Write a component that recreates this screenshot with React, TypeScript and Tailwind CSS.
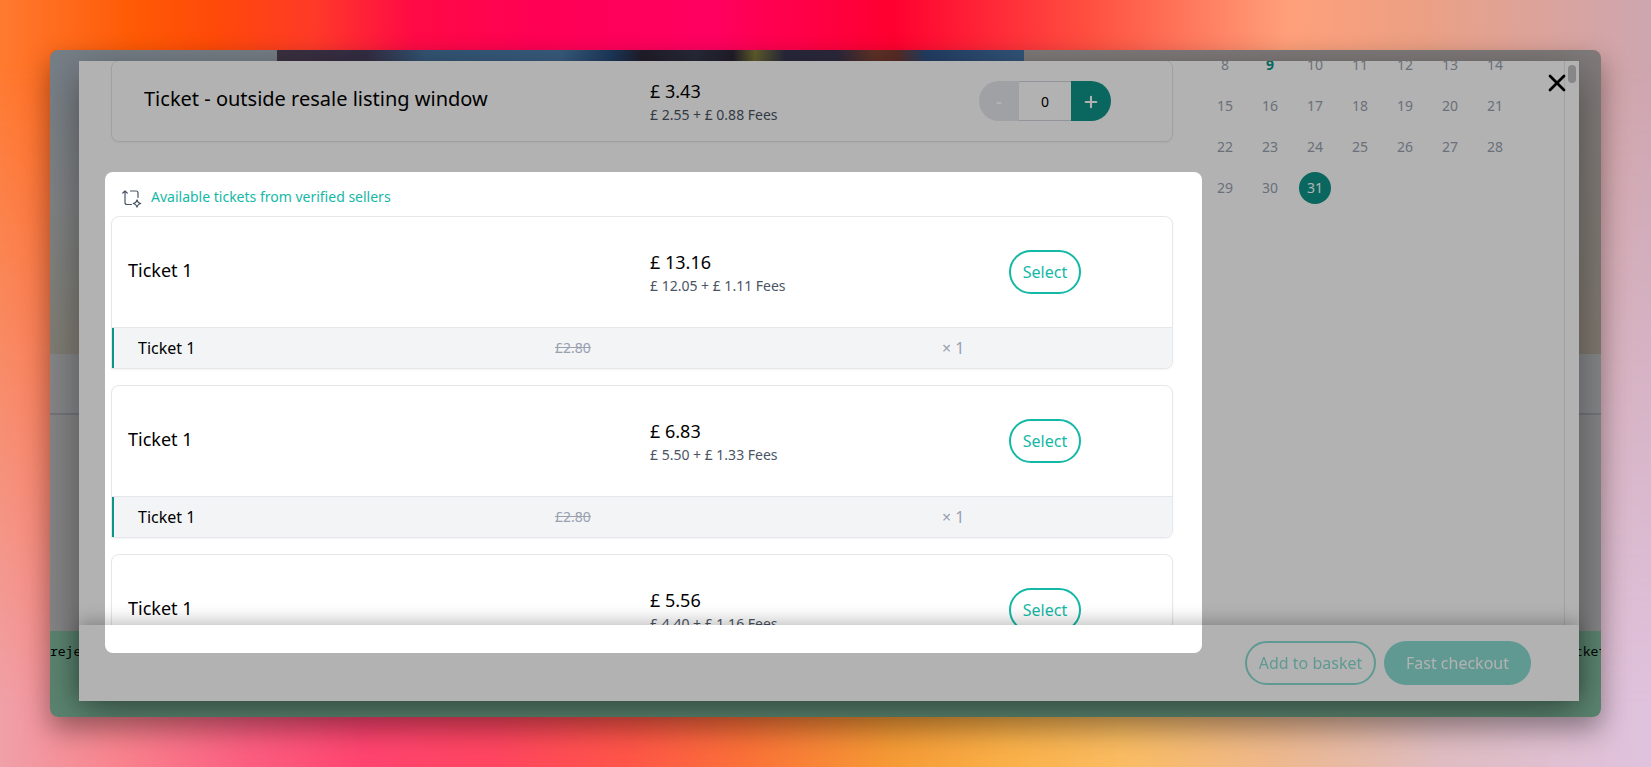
import React from 'react';
import { Plus, X } from "lucide-react";

interface Resale {
  id: number;
  name: string;
  price: string;
  breakdown: string;
  original: string;
  quantity: number;
}

const resales: Resale[] = [
  { id: 1, name: 'Ticket 1', price: '£ 13.16', breakdown: '£ 12.05 + £ 1.11 Fees', original: '£2.80', quantity: 1 },
  { id: 2, name: 'Ticket 1', price: '£ 6.83', breakdown: '£ 5.50 + £ 1.33 Fees', original: '£2.80', quantity: 1 },
  { id: 3, name: 'Ticket 1', price: '£ 5.56', breakdown: '£ 4.40 + £ 1.16 Fees', original: '£2.80', quantity: 1 },
];

const weeks = [
  [8, 9, 10, 11, 12, 13, 14],
  [15, 16, 17, 18, 19, 20, 21],
  [22, 23, 24, 25, 26, 27, 28],
  [29, 30, 31],
];

function dayClass(day: number) {
  if (day === 31) return 'flex size-8 items-center justify-center rounded-full bg-[#0d9488] text-white';
  if (day === 9) return 'flex size-8 items-center justify-center font-bold text-[#0d9488]';
  return 'flex size-8 items-center justify-center text-gray-400';
}

function ResaleIcon() {
  return (
    <svg viewBox="0 0 20 20" className="mt-1 size-5 text-gray-600" fill="none" stroke="currentColor" strokeWidth="1.2" strokeLinecap="round" strokeLinejoin="round" aria-hidden="true">
      <path d="M.8 4 3 2l2.2 2M3 2v11.5q0 2 2 2h4.5" />
      <path d="M8.5 2H14q2 0 2 2v4.5" />
      <path d="M15 10.8q.7 3 3.7 3.7-3 .7-3.7 3.7-.7-3-3.7-3.7 3-.7 3.7-3.7Z" />
    </svg>
  );
}

function Price({ price, breakdown }: { price: string; breakdown: string }) {
  return (
    <div className="pt-1">
      <p className="text-lg leading-6 text-black">{price}</p>
      <p className="text-sm leading-6 text-gray-600">{breakdown}</p>
    </div>
  );
}

function Stepper() {
  return (
    <div className="flex h-10 w-33">
      <button type="button" disabled aria-label="Remove one" className="w-10 rounded-l-full bg-gray-200 text-lg font-semibold text-white">-</button>
      <input aria-label="Quantity" defaultValue="0" className="w-13 border-y border-gray-300 bg-white pt-0.5 text-center text-sm text-black" />
      <button type="button" aria-label="Add one" className="flex w-10 items-center justify-center rounded-r-full bg-[#0d9488] pt-0.5 text-white">
        <Plus className="size-[18px]" strokeWidth={2.8} />
      </button>
    </div>
  );
}

function ResaleCard({ item }: { item: Resale }) {
  return (
    <li className="rounded-t-lg rounded-br-lg border border-gray-200 bg-white shadow-xs">
      <div className="grid h-[110px] grid-cols-[522fr_284fr_222fr] items-center px-4">
        <h3 className="pb-1 text-lg text-black">{item.name}</h3>
        <Price price={item.price} breakdown={item.breakdown} />
        <button type="button" className="h-11 w-18 justify-self-center rounded-full border-2 border-[#14b8a6] text-base text-[#14b8a6]">Select</button>
      </div>
      <div className="border-t border-gray-200">
        <div className="grid h-10 grid-cols-[417fr_387fr_230fr] items-center rounded-br-lg border-l-2 border-[#0d9488] bg-gray-100 pl-6 text-base">
          <p className="text-black">{item.name}</p>
          <p className="text-sm text-gray-400 line-through">{item.original}</p>
          <p className="text-gray-400">× {item.quantity}</p>
        </div>
      </div>
    </li>
  );
}

function Calendar() {
  return (
    <table className="-mt-[17px] ml-9 border-collapse text-sm">
      <tbody>
        {weeks.map((week) => (
          <tr key={week[0]}>
            {week.map((day) => (
              <td key={day} className="h-[41px] w-[45px] p-0 align-middle">
                <span className={dayClass(day)}>{day}</span>
              </td>
            ))}
          </tr>
        ))}
      </tbody>
    </table>
  );
}

function PageBehind() {
  return (
    <div className="absolute inset-0 flex flex-col overflow-hidden rounded-lg">
      <div className="flex h-[304px]">
        <div className="w-[227px] bg-linear-to-b from-[#aab6c2] via-[#b8bcbe] to-[#b8b4a6]" />
        <div className="h-full w-[747px] bg-[linear-gradient(90deg,#56465c_0%,#4c4262_12%,#4a7ba8_20%,#5185b5_38%,#285080_45%,#302a3c_49%,#3a3c52_56%,#302a3c_61%,#8a8640_64%,#3a3a56_68%,#403a56_75%,#8a4838_80%,#804038_83%,#325a90_87%,#4a7bb0_100%)]" />
        <div className="flex-1 bg-linear-to-b from-[#b8b0b0] to-[#b6ad9f]" />
      </div>
      <div className="h-[61px] border-b-2 border-[#a6a8ae] bg-[#c0c1c4]" />
      <div className="flex-1 bg-[#bfbfc1]" />
      <div className="flex h-[86px] justify-between bg-[#83bfa1] pt-3 font-['Noto_Sans_Mono','DejaVu_Sans_Mono',monospace] text-[13px] leading-4 text-black">
        <span>reje</span>
        <span className="w-[26px]">cket</span>
      </div>
    </div>
  );
}

function App() {
  return (
    <div className="min-h-screen bg-[linear-gradient(90deg,#ff7a30_0%,#ff5a05_8%,#ff4a08_13%,#ff3a28_19%,#ff0a45_25%,#ff0055_33%,#ff0060_43%,#ff0030_54%,#ff5040_66%,#ffa07a_78%,#eca084_86%,#cda6b0_100%)] font-['Noto_Sans','Open_Sans',sans-serif]">
      <div className="min-h-screen bg-[linear-gradient(90deg,#f0a0a8_0%,#f8848e_7%,#fb5e80_15%,#ff4470_22%,#ff4560_30%,#ff5548_38%,#fb7038_45%,#f59a35_54%,#fab048_61%,#fabc62_68%,#eeb88c_77%,#dfbcc0_87%,#dfc2de_100%)] mask-[linear-gradient(to_bottom,transparent_8%,black_92%)]" />
      <div className="relative -mt-[100vh] h-screen p-[50px]">
        <div className="relative h-full overflow-hidden rounded-lg pt-[11px] pr-[22px] pb-4 pl-[29px] shadow-[0_12px_28px_rgba(0,0,0,0.4)]">
          <PageBehind />
          <main className="relative flex h-full flex-col bg-white shadow-[0_12px_40px_rgba(0,0,0,0.4)]">
            <div className="flex min-h-0 flex-1 overflow-hidden pl-8">
              <section className="w-[1062px] max-w-[73%] shrink-0">
                <div className="-mt-px grid h-[82px] grid-cols-[522fr_284fr_222fr] items-center rounded-lg border border-gray-200 bg-white px-4 shadow-xs">
                  <h2 className="pb-1 pl-4 text-xl font-normal text-black">Ticket - outside resale listing window</h2>
                  <Price price="£ 3.43" breakdown="£ 2.55 + £ 0.88 Fees" />
                  <div className="justify-self-center">
                    <Stepper />
                  </div>
                </div>
                <div className="mt-[45px] flex h-5 items-center gap-[9px] pl-[11px]">
                  <ResaleIcon />
                  <p className="text-sm text-[#14b8a6]">Available tickets from verified sellers</p>
                </div>
                <ul className="mt-[9px] space-y-4">
                  {resales.map((item) => (
                    <ResaleCard key={item.id} item={item} />
                  ))}
                </ul>
              </section>
              <aside className="flex-1 border-r border-gray-200">
                <Calendar />
              </aside>
              <div className="w-[14px] px-[3px] pt-1">
                <div className="h-[18px] w-2 rounded-full bg-[#c2c2c2]" />
              </div>
            </div>
            <footer className="relative flex h-[76px] shrink-0 items-center justify-end gap-2 bg-white pr-12 shadow-[0_-4px_16px_rgba(0,0,0,0.25)]">
              <button type="button" className="h-11 w-[131px] rounded-full border-2 border-[#14b8a6] text-base text-[#14b8a6] opacity-50">Add to basket</button>
              <button type="button" className="h-11 w-[147px] rounded-full bg-[#14b8a6] text-base text-white opacity-50">Fast checkout</button>
            </footer>
          </main>
          {/* highlighted area, everything round it is dimmed */}
          <div className="pointer-events-none absolute top-[122px] right-[399px] bottom-[64px] left-[55px] rounded-lg shadow-[0_0_0_2000px_rgba(0,0,0,0.3)]" />
          <button type="button" aria-label="Close" className="absolute top-[19px] right-[30px] text-black">
            <X className="size-7" strokeWidth={2.4} />
          </button>
        </div>
      </div>
    </div>
  );
}

export default App;
